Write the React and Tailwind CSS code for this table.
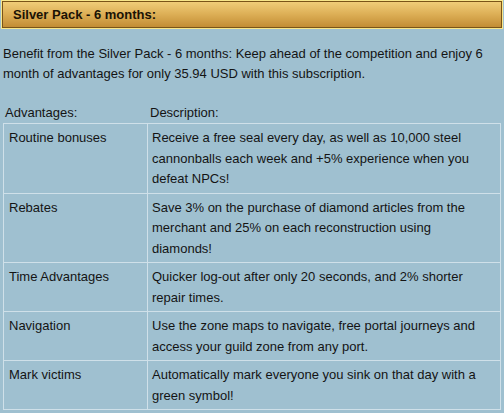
export default function App() {
  const rows = [
    ["Routine bonuses", "Receive a free seal every day, as well as 10,000 steel cannonballs each week and +5% experience when you defeat NPCs!"],
    ["Rebates", "Save 3% on the purchase of diamond articles from the merchant and 25% on each reconstruction using diamonds!"],
    ["Time Advantages", "Quicker log-out after only 20 seconds, and 2% shorter repair times."],
    ["Navigation", "Use the zone maps to navigate, free portal journeys and access your guild zone from any port."],
    ["Mark victims", "Automatically mark everyone you sink on that day with a green symbol!"],
  ];
  return (
    <div className="w-[504px] h-[413px] bg-[#9fc0d0] text-[#141414] text-[13px] overflow-hidden" style={{ fontFamily: '"Liberation Sans", Arial, sans-serif' }}>
      <div className="mx-[1px] h-[29px] border border-[#f8e68a]">
        <div className="h-full border border-[#7a5418] bg-gradient-to-b from-[#f0cd78] via-[#dcae55] to-[#c38d34] pl-[10px] flex items-center font-bold text-[#1a1205] text-[13px]">
          Silver Pack - 6 months:
        </div>
      </div>
      <p className="px-[3px] pt-[15px] leading-[20px]">
        Benefit from the Silver Pack - 6 months: Keep ahead of the competition and enjoy 6 month of advantages for only 35.94 USD with this subscription.
      </p>
      <div className="flex px-[5px] pt-[19px] leading-[20px]">
        <div className="w-[145px]">Advantages:</div>
        <div>Description:</div>
      </div>
      <table className="mx-[3px] w-[498px] border-collapse border border-[#cfe0e9]">
        <tbody>
          {rows.map(([a, b]) => (
            <tr key={a} className="border-b border-[#cfe0e9]">
              <td className="w-[144px] align-top border-r border-[#cfe0e9] pl-[5px] pr-[4px] pt-[4px] pb-[3px] leading-[20.5px]">{a}</td>
              <td className="align-top pl-[4px] pr-[6px] pt-[4px] pb-[3px] leading-[20.5px]">{b}</td>
            </tr>
          ))}
        </tbody>
      </table>
    </div>
  );
}
